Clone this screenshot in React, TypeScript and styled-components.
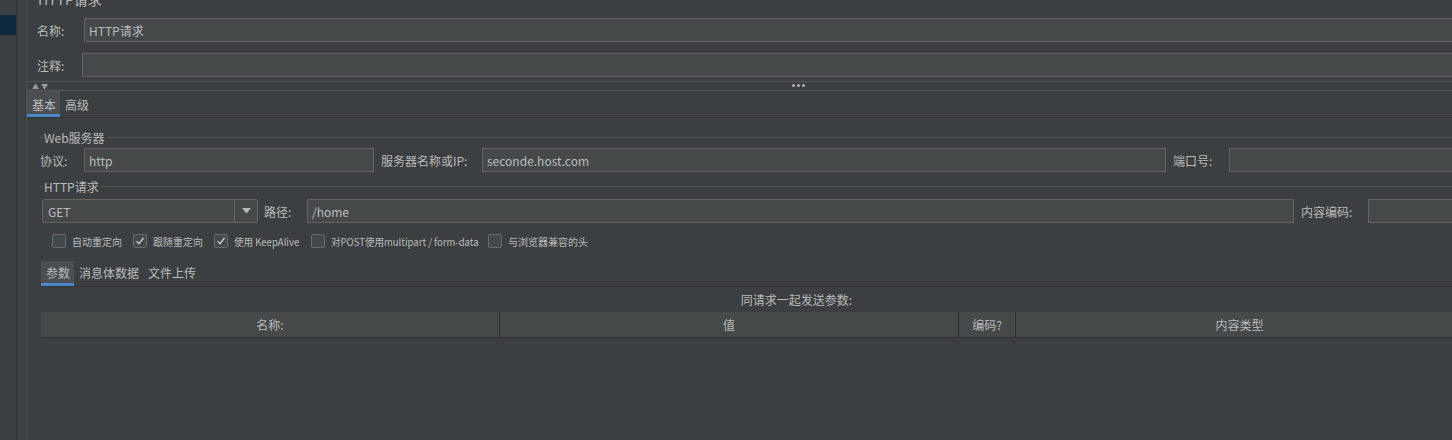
import styled, { createGlobalStyle } from "styled-components";

const GlobalStyle = createGlobalStyle`
  html, body {
    margin: 0;
    padding: 0;
    background: #3c3f41;
    overflow: hidden;
  }
  body {
    font-family: "Noto Sans CJK SC", "Noto Sans", sans-serif;
    font-size: 12px;
    color: #bbbbbb;
  }
`;

const Page = styled.div`
  display: flex;
  width: 1560px;
  height: 440px;
  background: #3c3f41;
`;

const Sidebar = styled.div`
  width: 17px;
  border-right: 1px solid #2f3132;
  padding-top: 15px;
  box-sizing: border-box;
`;

const SidebarSelected = styled.div`
  height: 20px;
  background: #0d293e;
`;

const Gutter = styled.div`
  width: 9px;
  border-right: 1px solid #4e5254;
`;

const Main = styled.div`
  flex: 1;
  display: flex;
  flex-direction: column;
`;

const Title = styled.div`
  height: 10px;
  margin-top: -9px;
  padding-left: 11px;
  font-size: 14px;
  line-height: 16px;
  color: #bbbbbb;
`;

const Row = styled.div<{ $top: number; $left: number }>`
  display: flex;
  align-items: center;
  height: 24px;
  margin-top: ${(p) => p.$top}px;
  padding-left: ${(p) => p.$left}px;
`;

const Label = styled.span<{ $w?: number; $pad?: number }>`
  flex: none;
  box-sizing: border-box;
  width: ${(p) => (p.$w ? `${p.$w}px` : "auto")};
  padding-left: ${(p) => p.$pad ?? 0}px;
  white-space: nowrap;
  font-size: 12px;
`;

const Input = styled.div<{ $w?: number }>`
  box-sizing: border-box;
  height: 24px;
  flex: ${(p) => (p.$w ? "none" : "1")};
  width: ${(p) => (p.$w ? `${p.$w}px` : "auto")};
  background: #45494a;
  border: 1px solid #646464;
  padding: 0 4px;
  display: flex;
  align-items: center;
  font-size: 12px;
  color: #bbbbbb;
`;

const Splitter = styled.div`
  margin-top: 4px;
  height: 8px;
  border-top: 1px solid #555859;
  border-bottom: 1px solid #555859;
  display: flex;
  align-items: center;
  position: relative;
  padding-left: 5px;
`;

const Arrows = styled.span`
  font-size: 7px;
  color: #9a9a9a;
  letter-spacing: 2px;
`;

const Dots = styled.div`
  position: absolute;
  left: 765px;
  top: 2px;
  display: flex;
  gap: 2px;
`;

const Dot = styled.span`
  width: 3px;
  height: 3px;
  border-radius: 50%;
  background: #b0b0b0;
`;

const TabBar = styled.div<{ $top: number; $h: number }>`
  display: flex;
  height: ${(p) => p.$h}px;
  margin-top: ${(p) => p.$top}px;
  border-bottom: 1px solid #323232;
`;

const Tab = styled.div<{ $active?: boolean; $lower?: number }>`
  display: flex;
  align-items: center;
  padding: ${(p) => p.$lower ?? 0}px 4px 0 5px;
  font-size: 12px;
  color: #bbbbbb;
  background: ${(p) => (p.$active ? "#4b4f51" : "transparent")};
  border-bottom: 3px solid ${(p) => (p.$active ? "#4a88c7" : "transparent")};
  box-sizing: border-box;
`;

const GroupTitle = styled.div<{ $top: number }>`
  display: flex;
  align-items: center;
  margin-top: ${(p) => p.$top}px;
  padding-left: 13px;
  height: 16px;
  font-size: 12px;
  &::before {
    content: "";
    width: 3px;
    height: 1px;
    background: #555859;
    margin-right: 1px;
  }
  &::after {
    content: "";
    flex: 1;
    height: 1px;
    background: #555859;
    margin-left: 2px;
  }
`;

const Combo = styled.div`
  box-sizing: border-box;
  width: 216px;
  height: 24px;
  flex: none;
  display: flex;
  background: #45494a;
  border: 1px solid #646464;
  border-radius: 2px;
`;

const ComboValue = styled.div`
  flex: 1;
  display: flex;
  align-items: center;
  padding-left: 5px;
`;

const ComboButton = styled.div`
  width: 22px;
  border-left: 1px solid #646464;
  display: flex;
  align-items: center;
  justify-content: center;
`;

const Options = styled.div`
  display: flex;
  align-items: center;
  height: 16px;
  margin-top: 10px;
  padding-left: 25px;
`;

const Option = styled.label<{ $w?: number }>`
  display: flex;
  align-items: center;
  gap: 6px;
  flex: none;
  width: ${(p) => (p.$w ? `${p.$w}px` : "auto")};
  font-size: 10px;
  color: #bbbbbb;
  white-space: nowrap;
`;

const OptionText = styled.span<{ $squeeze?: boolean }>`
  display: inline-block;
  transform-origin: left center;
  transform: ${(p) => (p.$squeeze ? "scaleX(0.955)" : "none")};
`;

const Box = styled.span`
  box-sizing: border-box;
  flex: none;
  width: 14px;
  height: 14px;
  border: 1px solid #6b6b6b;
  border-radius: 2px;
  background: #43494a;
  display: flex;
  align-items: center;
  justify-content: center;
`;

const ParamsArea = styled.div`
  padding-left: 14px;
  display: flex;
  flex-direction: column;
`;

const Caption = styled.div`
  height: 25px;
  display: flex;
  align-items: center;
  justify-content: center;
  width: 1423px;
  padding-left: 88px;
  box-sizing: border-box;
  font-size: 12px;
`;

const TableHead = styled.div`
  display: flex;
  width: 1423px;
  height: 25px;
  background: #45494a;
  border-bottom: 1px solid #2e3031;
`;

const HeadCell = styled.div<{ $w?: number }>`
  box-sizing: border-box;
  width: ${(p) => (p.$w ? `${p.$w}px` : "auto")};
  flex: ${(p) => (p.$w ? "none" : "1")};
  border-right: 1px solid #2e3031;
  display: flex;
  align-items: center;
  justify-content: center;
  font-size: 12px;
`;

const Check = () => (
  <svg width="10" height="10" viewBox="0 0 10 10">
    <path d="M1.5 5.2 L4 7.8 L8.6 1.8" fill="none" stroke="#c8c8c8" strokeWidth="1.4" />
  </svg>
);

const options = [
  { label: "自动重定向", checked: false, w: 81 },
  { label: "跟随重定向", checked: true, w: 81 },
  { label: "使用 KeepAlive", checked: true, w: 97, squeeze: true },
  { label: "对POST使用multipart / form-data", checked: false, w: 177, squeeze: true },
  { label: "与浏览器兼容的头", checked: false },
];

export default function App() {
  return (
    <>
      <GlobalStyle />
      <Page>
        <Sidebar>
          <SidebarSelected />
        </Sidebar>
        <Gutter />
        <Main>
          <Title>HTTP请求</Title>
          <Row $top={17} $left={10}>
            <Label $w={47}>名称:</Label>
            <Input>HTTP请求</Input>
          </Row>
          <Row $top={11} $left={10}>
            <Label $w={45}>注释:</Label>
            <Input />
          </Row>
          <Splitter>
            <Arrows>▲▼</Arrows>
            <Dots>
              <Dot />
              <Dot />
              <Dot />
            </Dots>
          </Splitter>
          <TabBar $top={0} $h={26}>
            <Tab $active $lower={3}>
              基本
            </Tab>
            <Tab $lower={3}>高级</Tab>
          </TabBar>

          <GroupTitle $top={11}>Web服务器</GroupTitle>
          <Row $top={3} $left={13}>
            <Label $w={44}>协议:</Label>
            <Input $w={290}>http</Input>
            <Label $w={108} $pad={7}>
              服务器名称或IP:
            </Label>
            <Input $w={684}>seconde.host.com</Input>
            <Label $w={63} $pad={7}>
              端口号:
            </Label>
            <Input />
          </Row>

          <GroupTitle $top={6}>HTTP请求</GroupTitle>
          <Row $top={5} $left={15}>
            <Combo>
              <ComboValue>GET</ComboValue>
              <ComboButton>
                <svg width="9" height="6" viewBox="0 0 9 6">
                  <path d="M0 0 H9 L4.5 5.5 Z" fill="#b8b8b8" />
                </svg>
              </ComboButton>
            </Combo>
            <Label $w={49} $pad={6}>
              路径:
            </Label>
            <Input $w={987}>/home</Input>
            <Label $w={74} $pad={7}>
              内容编码:
            </Label>
            <Input />
          </Row>

          <Options>
            {options.map((o) => (
              <Option key={o.label} $w={o.w}>
                <Box>{o.checked && <Check />}</Box>
                <OptionText $squeeze={o.squeeze}>{o.label}</OptionText>
              </Option>
            ))}
          </Options>

          <ParamsArea>
            <TabBar $top={12} $h={25}>
              <Tab $active>参数</Tab>
              <Tab>消息体数据</Tab>
              <Tab>文件上传</Tab>
            </TabBar>
            <Caption>同请求一起发送参数:</Caption>
            <TableHead>
              <HeadCell $w={459}>名称:</HeadCell>
              <HeadCell $w={459}>值</HeadCell>
              <HeadCell $w={57}>编码?</HeadCell>
              <HeadCell>内容类型</HeadCell>
            </TableHead>
          </ParamsArea>
        </Main>
      </Page>
    </>
  );
}
